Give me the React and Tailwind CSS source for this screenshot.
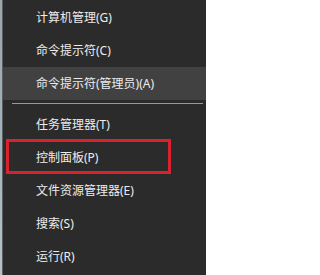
import React from "react";

function Row({ label, active, boxed }) {
  return (
    <div
      className={
        "relative h-[33px] flex items-center pl-[33px] " +
        (active ? "bg-[#414141]" : "")
      }
    >
      <span className="text-[12px] text-[#ededed] leading-none">{label}</span>
      {boxed && (
        <div className="absolute left-[3px] -top-[2px] w-[165px] h-[35px] border-[3px] border-[#d8232f]" />
      )}
    </div>
  );
}

function App() {
  return (
    <div className="w-[206px] h-[275px] flex bg-[#2b2b2b] font-['Noto_Sans','Noto_Sans_CJK_SC',sans-serif] overflow-hidden">
      {/* desktop edge behind the menu */}
      <div className="w-[2px] bg-gradient-to-b from-[#9ea6aa] via-[#9fb3bf] to-[#b4c3c8]" />
      <div className="w-[1px] bg-[#5c5c5c]" />

      <div className="flex-1 flex flex-col pt-[1px]">
        <Row label="计算机管理(G)" />
        <Row label="命令提示符(C)" />
        <Row label="命令提示符(管理员)(A)" active />
        <div className="mt-[3px] mb-[4px] ml-[9px] mr-[3px] h-[1px] bg-[#9a9a9a]" />
        <Row label="任务管理器(T)" />
        <Row label="控制面板(P)" boxed />
        <Row label="文件资源管理器(E)" />
        <Row label="搜索(S)" />
        <Row label="运行(R)" />
      </div>
    </div>
  );
}

export default App;
